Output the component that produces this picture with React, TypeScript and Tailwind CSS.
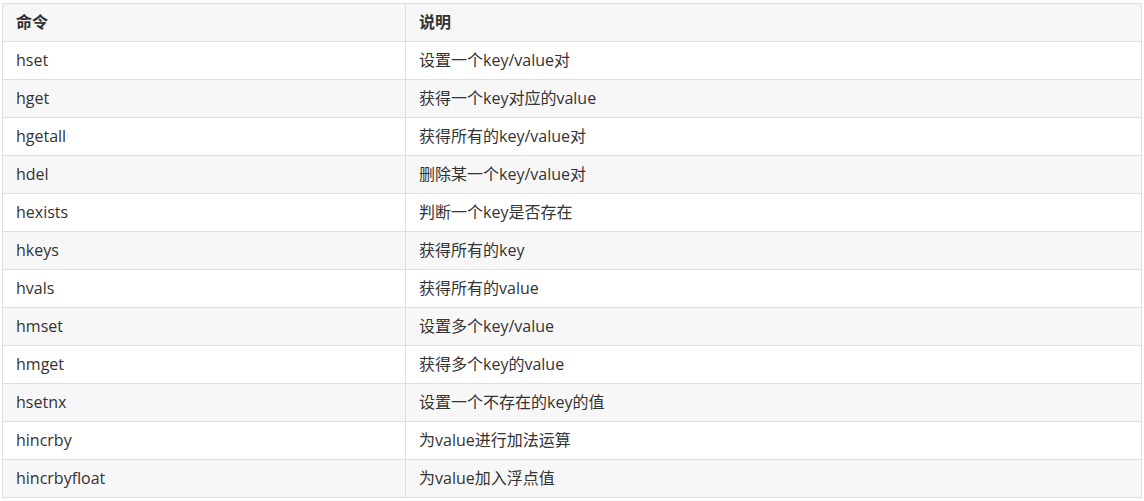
const rows: [string, string][] = [
  ["hset", "设置一个key/value对"],
  ["hget", "获得一个key对应的value"],
  ["hgetall", "获得所有的key/value对"],
  ["hdel", "删除某一个key/value对"],
  ["hexists", "判断一个key是否存在"],
  ["hkeys", "获得所有的key"],
  ["hvals", "获得所有的value"],
  ["hmset", "设置多个key/value"],
  ["hmget", "获得多个key的value"],
  ["hsetnx", "设置一个不存在的key的值"],
  ["hincrby", "为value进行加法运算"],
  ["hincrbyfloat", "为value加入浮点值"],
]

export default function App() {
  return (
    <div className="bg-white pt-[3px] pl-[2px] pr-[2px] font-['Open_Sans','Noto_Sans_CJK_SC',sans-serif] text-[16px] leading-[22px] text-[#333]">
      <table className="w-[1140px] border-collapse border border-[#dfdfdf]">
        <thead>
          <tr className="h-[38px] bg-[#f7f7f7]">
            <th className="w-[403px] border border-[#dfdfdf] px-[13px] pb-[1px] text-left font-bold">命令</th>
            <th className="border border-[#dfdfdf] px-[13px] pb-[1px] text-left font-bold">说明</th>
          </tr>
        </thead>
        <tbody>
          {rows.map(([cmd, desc], i) => (
            <tr key={cmd} className={`h-[38px] ${i % 2 === 1 ? "bg-[#f7f7f7]" : "bg-white"}`}>
              <td className="border border-[#dfdfdf] px-[13px] pb-[1px]">{cmd}</td>
              <td className="border border-[#dfdfdf] px-[13px] pb-[1px]">{desc}</td>
            </tr>
          ))}
        </tbody>
      </table>
    </div>
  )
}
